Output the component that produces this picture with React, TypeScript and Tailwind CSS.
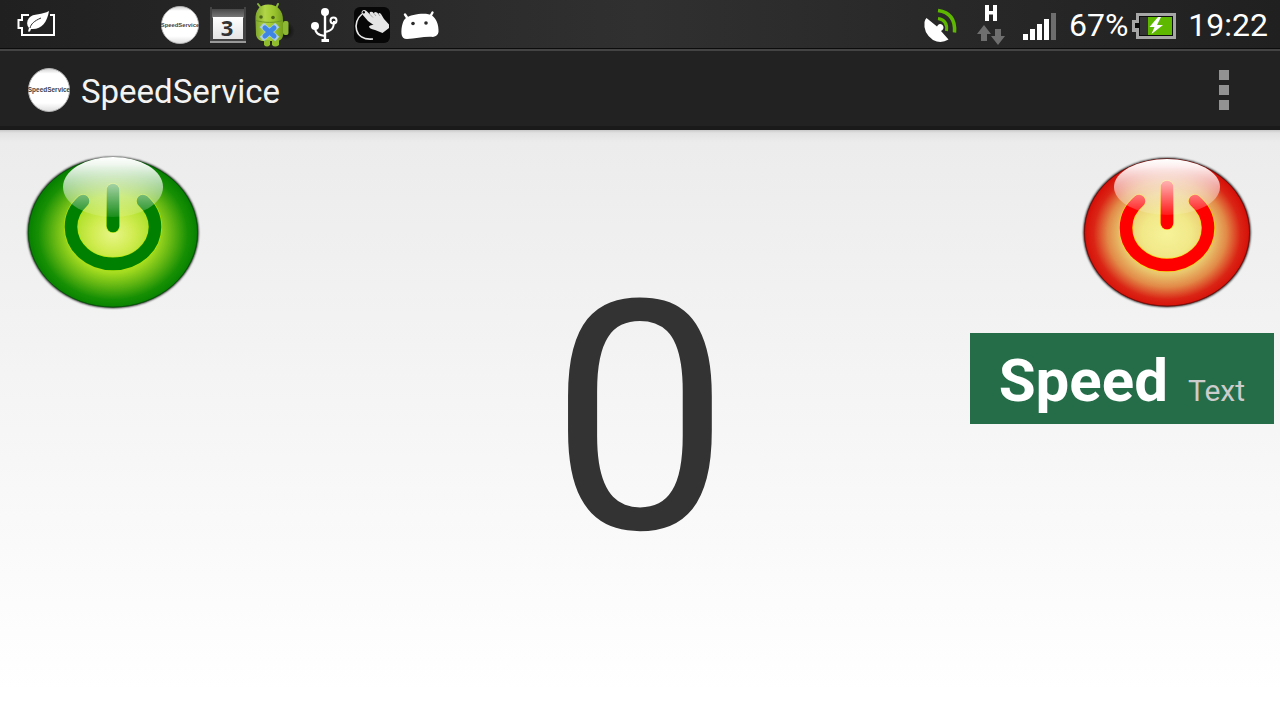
import React from 'react';

interface PowerButtonProps {
  id: string;
  label: string;
  stops: [string, string][];
  rx: number;
  ry: number;
  rim: string;
  halo: string;
  symbol: string;
  arc: string;
  barTop: number;
  shineTop: number;
  shineRx: number;
  shineRy: number;
}

const PowerButton: React.FC<PowerButtonProps> = ({
  id,
  label,
  stops,
  rx,
  ry,
  rim,
  halo,
  symbol,
  arc,
  barTop,
  shineTop,
  shineRx,
  shineRy,
}) => {
  const bar = `M92 ${barTop}v36`;

  return (
    <button type="button" aria-label={label} className="block cursor-pointer">
      <svg width="184" height="164" viewBox="0 0 184 164" fill="none">
        <defs>
          <radialGradient id={`${id}-body`} cx="0.5" cy="0.51" r="0.5">
            {stops.map(([offset, color]) => (
              <stop key={offset} offset={offset} stopColor={color} />
            ))}
          </radialGradient>
          <linearGradient id={`${id}-shine`} x1="0" y1="0" x2="0" y2="1">
            <stop offset="0" stopColor="#fff" />
            <stop offset="0.12" stopColor="#fff" stopOpacity="0.94" />
            <stop offset="0.55" stopColor="#fff" stopOpacity="0.55" />
            <stop offset="1" stopColor="#fff" stopOpacity="0.1" />
          </linearGradient>
          <filter id={`${id}-soft`} x="-10%" y="-10%" width="120%" height="120%">
            <feGaussianBlur stdDeviation="1.3" />
          </filter>
        </defs>
        <ellipse cx="92" cy="82.5" rx={rx + 0.5} ry={ry + 0.5} fill="#000" filter={`url(#${id}-soft)`} />
        <ellipse cx="92" cy="82.5" rx={rx - 0.5} ry={ry - 0.5} fill={`url(#${id}-body)`} stroke={rim} strokeWidth="1" />
        <g strokeLinecap="round" stroke={halo} strokeWidth="14" opacity="0.8">
          <path d={arc} />
          <path d={bar} />
        </g>
        <g strokeLinecap="round" stroke={symbol} strokeWidth="12.6">
          <path d={arc} />
          <path d={bar} />
        </g>
        <ellipse cx="92" cy={shineTop + shineRy} rx={shineRx} ry={shineRy} fill={`url(#${id}-shine)`} />
      </svg>
    </button>
  );
};

const AppBadge = ({ className }: { className: string }) => (
  <svg viewBox="0 0 44 44" className={className} preserveAspectRatio="none" aria-hidden="true">
    <defs>
      <linearGradient id="badge" x1="0" y1="0" x2="0" y2="1">
        <stop offset="0" stopColor="#d0d0d0" />
        <stop offset="0.12" stopColor="#fff" />
        <stop offset="0.8" stopColor="#fff" />
        <stop offset="1" stopColor="#dedede" />
      </linearGradient>
    </defs>
    <circle cx="22" cy="22" r="21.5" fill="url(#badge)" stroke="#b5b5b5" strokeWidth="1" />
    <text
      x="22"
      y="24"
      textAnchor="middle"
      fontFamily="Liberation Sans, Arial, sans-serif"
      fontWeight="bold"
      fontSize="6.8"
      fill="#444"
    >
      SpeedService
    </text>
  </svg>
);

const PowerSaverIcon = () => (
  <svg width="48" height="48" viewBox="0 0 48 48" fill="none" aria-hidden="true">
    <path d="M17 15H10V20H6.500V28H10V35H42V15H38" stroke="#fff" strokeWidth="2" />
    <path
      d="M37 11C31 15 21 13 17 18C14.500 21.500 14.500 25 17 28L16 31.500H18L19 29C29 30 35 23 37 11Z"
      fill="#fff"
      stroke="#2a2a2a"
      strokeWidth="1"
      paintOrder="stroke"
    />
    <path d="M18 28C19 24 22 21 29 18" stroke="#2a2a2a" strokeWidth="1" />
  </svg>
);

const CalendarIcon = () => (
  <svg width="48" height="48" viewBox="0 0 48 48" aria-hidden="true">
    <defs>
      <linearGradient id="calTop" x1="0" y1="0" x2="0" y2="1">
        <stop offset="0" stopColor="#484848" />
        <stop offset="1" stopColor="#7c7c7c" />
      </linearGradient>
      <linearGradient id="calPage" x1="0" y1="0" x2="0" y2="1">
        <stop offset="0" stopColor="#fff" />
        <stop offset="1" stopColor="#e4e4e4" />
      </linearGradient>
    </defs>
    <path d="M6 7H8V9H40V7H42V42H6Z" fill="#444" />
    <path d="M8 9H40V18H8Z" fill="url(#calTop)" />
    <path d="M6 41H42V43H6Z" fill="#999" />
    <path d="M9 17H39V39H9Z" fill="url(#calPage)" />
    <text
      x="23"
      y="36"
      textAnchor="middle"
      fontFamily="Open Sans, sans-serif"
      fontWeight="bold"
      fontSize="22"
      fill="#333"
    >
      3
    </text>
  </svg>
);

const DroidIcon = () => (
  <svg width="48" height="48" viewBox="0 0 48 48" aria-hidden="true">
    <defs>
      <linearGradient id="droid" x1="0" y1="0" x2="1" y2="0">
        <stop offset="0" stopColor="#7da52c" />
        <stop offset="0.35" stopColor="#b2d646" />
        <stop offset="0.7" stopColor="#98c22c" />
        <stop offset="1" stopColor="#749d1c" />
      </linearGradient>
      <radialGradient id="droidShade">
        <stop offset="0" stopColor="#000" stopOpacity="0.8" />
        <stop offset="1" stopColor="#000" stopOpacity="0" />
      </radialGradient>
    </defs>
    <ellipse cx="34" cy="31" rx="9" ry="9" fill="url(#droidShade)" />
    <path d="M6 4L9 8M26 4L24 8" stroke="#8ab53a" strokeWidth="2" strokeLinecap="round" />
    <path d="M3.500 20C3 10 8 4.500 16 4.500C26 4.500 31 11 31 20V36Q30 40 26 41H10Q5 40 4 35Z" fill="url(#droid)" />
    <rect x="31" y="21" width="5.500" height="14" rx="2" fill="#8db832" />
    <path d="M12 40H18V45Q15 48 12 45ZM20 40H27V45Q23 48 20 45Z" fill="#8fbc2c" />
    <path d="M4 20.500C12 23 23 23 31 20.500" fill="none" stroke="#6f9626" strokeWidth="1" />
    <circle cx="9" cy="17" r="1.800" fill="#4c6619" />
    <circle cx="21" cy="17.500" r="1.800" fill="#4c6619" />
    <path d="M12 27L23 37M23 27L12 37" stroke="#a9cbee" strokeWidth="6" strokeLinecap="square" />
    <path d="M13 28L22 36M22 28L13 36" stroke="#3f86e4" strokeWidth="5" strokeLinecap="round" />
  </svg>
);

const UsbIcon = () => (
  <svg width="48" height="48" viewBox="0 0 48 48" fill="none" aria-hidden="true">
    <g stroke="#fff" strokeWidth="2">
      <path d="M25 12V40" strokeWidth="2.400" />
      <path d="M15 27C15 33 18 35 25 36" />
      <path d="M34 21C34 29 31 31 25 32" />
      <circle cx="33.500" cy="20.500" r="3" />
    </g>
    <circle cx="25" cy="12" r="4" fill="#fff" />
    <circle cx="15" cy="26" r="4" fill="#fff" />
    <path d="M21.500 39H29V42H21.500Z" fill="#fff" />
  </svg>
);

const GestureIcon = () => (
  <svg width="48" height="48" viewBox="0 0 48 48" fill="none" aria-hidden="true">
    <rect x="6" y="7" width="36" height="36" rx="6" fill="#070707" />
    <path d="M14 14C4 22 6 41 25 39" stroke="#e8e8e8" strokeWidth="1.600" />
    <path
      d="M14 11Q16 9 18.500 11L22.500 15L21.500 13Q22 11 24.500 12L26 13.500Q26 11 29 12.500L30.500 14Q31 12 33 14L36 19L41 24.500V28L34.500 33L27 30Q21 28.500 21 26.500Q22 24.500 25.500 25L20 21L14 14Q13 12.500 14 11Z"
      fill="#e5e5e5"
    />
    <path d="M22.500 15L25 17.500M26 13.500L28 16M30.500 14L32 16" stroke="#777" strokeWidth="0.600" />
    <circle cx="15.800" cy="12.300" r="1.200" fill="#070707" />
  </svg>
);

const AndroidHeadIcon = () => (
  <svg width="48" height="48" viewBox="0 0 48 48" fill="none" aria-hidden="true">
    <path d="M9 14.500L12 19M36.500 12.500L34 17" stroke="#fff" strokeWidth="2.400" strokeLinecap="round" />
    <path
      d="M10 18C15 14 31 12 36 15.500C40 18 43 25 42.500 32Q42 36 37 37C29 36 20 39 11 39Q6 39 5.500 34C5 27 7 20 10 18Z"
      fill="#fff"
    />
    <circle cx="17" cy="23.500" r="1.800" fill="#2a2a2a" />
    <circle cx="30" cy="23" r="1.800" fill="#2a2a2a" />
  </svg>
);

const GpsIcon = () => (
  <svg width="36" height="48" viewBox="0 0 36 48" fill="none" aria-hidden="true">
    <path
      d="M3.500 18L14 26.500L15 25Q17 23 19.500 25Q21.500 27.500 19.500 30L18 31L25.500 39.500Q18 44 10 40Q0 33 1.500 22Q2 19.500 3.500 18Z"
      fill="#fff"
    />
    <path d="M15 18.500Q25 20 23.500 31" stroke="#5eb800" strokeWidth="3" />
    <path d="M15 10.500Q33 13 31.500 32.500" stroke="#5eb800" strokeWidth="3.500" />
  </svg>
);

const DataIcon = () => (
  <svg width="32" height="48" viewBox="0 0 32 48" aria-hidden="true">
    <path d="M10 5H14V11H18V5H22V21H18V14.500H14V21H10Z" fill="#fff" />
    <path d="M9 25L16 34H12V41H6V34H2Z" fill="#6e6e6e" />
    <path d="M20 29H26V36H30L23 45L16 36H20Z" fill="#6e6e6e" />
  </svg>
);

const SignalIcon = () => (
  <svg width="34" height="48" viewBox="0 0 34 48" aria-hidden="true">
    <path d="M0 34H5V40H0ZM7 29H12V40H7ZM14 24H19V40H14ZM21 19H26V40H21Z" fill="#fff" />
    <path d="M28 13H33V40H28Z" fill="#6e6e6e" />
  </svg>
);

const BatteryIcon = () => (
  <svg width="44" height="48" viewBox="0 0 44 48" aria-hidden="true">
    <path d="M4 13H44V39H4V32H0V20H4Z" fill="#a6a6a6" />
    <path d="M7 16H41V36H7V28H3V23H7Z" fill="#0c0c0c" />
    <path d="M8 17H16V35H8Z" fill="#333" />
    <path d="M16 17H40V35H16Z" fill="#5eb800" />
    <path d="M26 17L17.500 27H22.500L19.500 34L31 25H25L29 17Z" fill="#fff" />
  </svg>
);

const GREEN_STOPS: [string, string][] = [
  ['0', '#e8f587'],
  ['0.25', '#d0ec50'],
  ['0.52', '#a5dc20'],
  ['0.7', '#62b612'],
  ['0.88', '#189004'],
  ['1', '#068000'],
];

const RED_STOPS: [string, string][] = [
  ['0', '#f7f39a'],
  ['0.3', '#f1e888'],
  ['0.55', '#e9c56e'],
  ['0.72', '#e28a48'],
  ['0.89', '#da2515'],
  ['1', '#d60f08'],
];

export default function App() {
  return (
    <div className="flex min-h-screen flex-col bg-white font-['Roboto',sans-serif]">
      {/* Status bar */}
      <div className="flex h-[49px] items-center justify-between border-b border-[#0c0c0c] bg-linear-to-r from-[#202020] via-[#303030] to-[#202020] px-3 text-[32px] leading-none text-white">
        <div className="flex items-center">
          <PowerSaverIcon />
          <div className="ml-24 flex w-12 items-center justify-center pt-0.5">
            <AppBadge className="size-[38px]" />
          </div>
          <CalendarIcon />
          <DroidIcon />
          <UsbIcon />
          <GestureIcon />
          <AndroidHeadIcon />
        </div>
        <div className="flex items-center">
          <GpsIcon />
          <div className="ml-4">
            <DataIcon />
          </div>
          <div className="ml-4">
            <SignalIcon />
          </div>
          <span className="ml-3 pt-0.5">67%</span>
          <div className="ml-1">
            <BatteryIcon />
          </div>
          <span className="ml-3 pt-0.5">19:22</span>
        </div>
      </div>

      {/* Action bar */}
      <header className="flex h-[81px] items-center justify-between border-t-2 border-b-4 border-t-[#444] border-b-[#1a1a1a] bg-[#222] pt-[3px] pr-[51px] pl-7">
        <div className="flex items-center gap-[11px]">
          <AppBadge className="h-11 w-[42px]" />
          <h1 className="pt-0.5 text-[33px] leading-none text-[#f3f3f3]">SpeedService</h1>
        </div>
        <button type="button" aria-label="More options" className="flex cursor-pointer flex-col gap-[5px]">
          <span className="size-2.5 bg-[#929292]" />
          <span className="size-2.5 bg-[#929292]" />
          <span className="size-2.5 bg-[#929292]" />
        </button>
      </header>

      {/* Content */}
      <main className="grid flex-1 grid-cols-[1fr_auto_1fr] bg-[linear-gradient(to_bottom,#c8c8c8_0,#e2e2e2_3px,#ececec_12px,#fff_95%)]">
        <div className="pt-5 pl-[21px]">
          <PowerButton
            id="start"
            label="Start"
            stops={GREEN_STOPS}
            rx={85}
            ry={75}
            rim="#055a05"
            halo="#b8e600"
            symbol="#008000"
            arc="M62 51A42 37 0 1 0 122 51"
            barTop={40}
            shineTop={7}
            shineRx={50}
            shineRy={30}
          />
        </div>
        <output className="self-center pb-3 text-[320px] leading-none text-[#333]">0</output>
        <div className="flex flex-col items-end pt-5">
          <div className="pr-[21px]">
            <PowerButton
              id="stop"
              label="Stop"
              stops={RED_STOPS}
              rx={83}
              ry={74}
              rim="#7c0d08"
              halo="#ffdc00"
              symbol="#ff0000"
              arc="M64 51A41 37 0 1 0 120 51"
              barTop={37}
              shineTop={9}
              shineRx={53}
              shineRy={28}
            />
          </div>
          <div className="mt-[19px] mr-1.5 flex h-[91px] items-baseline gap-5 bg-[#256d49] px-[29px] pt-[18px]">
            <span className="text-6xl leading-none font-bold text-white">Speed</span>
            <span className="text-3xl leading-none text-[#ccc]">Text</span>
          </div>
        </div>
      </main>
    </div>
  );
}
